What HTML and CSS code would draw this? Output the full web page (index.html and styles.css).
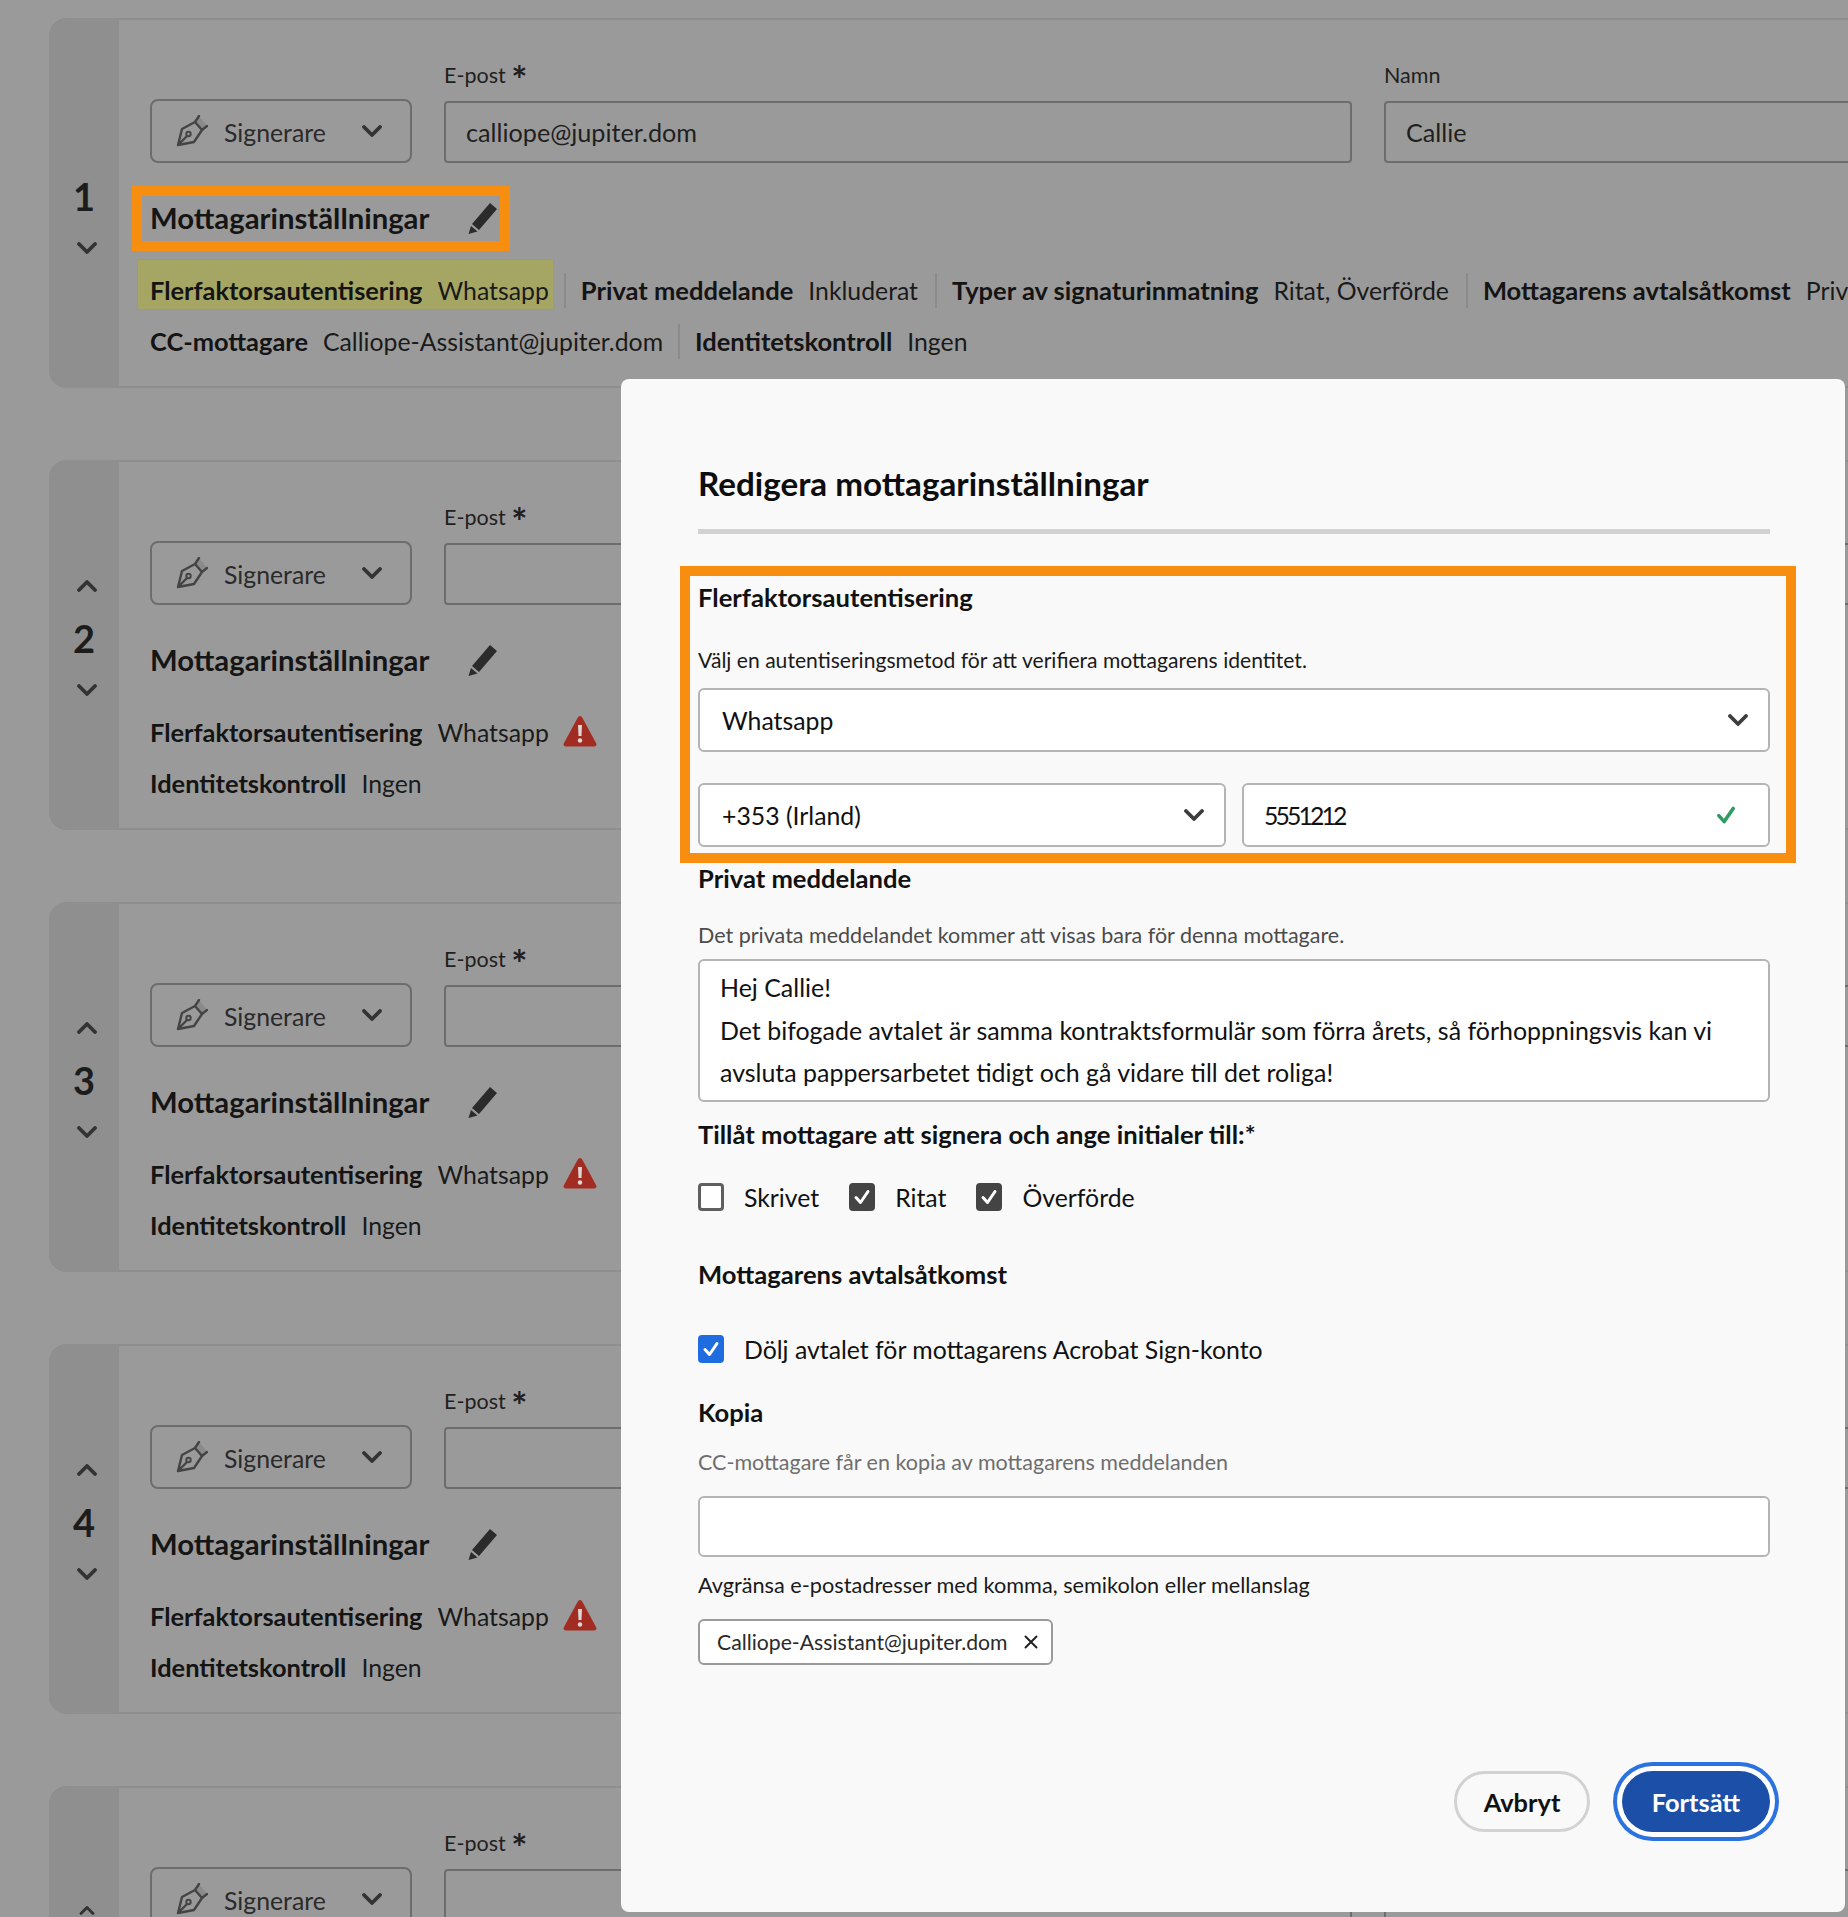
FILE: index.html
```html
<!DOCTYPE html>
<html lang="sv">
<head>
<meta charset="utf-8">
<title>Redigera mottagarinställningar</title>
<link rel="stylesheet" href="styles.css">
</head>
<body>
<svg class="defs" width="0" height="0" aria-hidden="true">
  <symbol id="pen" viewBox="0 0 32 32">
    <path d="M23 1 L31 11 L26 15 L19 7 Z" fill="#8a8a8a" stroke="none"/>
    <path d="M2 30 L6 14 L19 7 L26 15 L18 27 Z M19 7 L23 1 M26 15 L31 11 M2 30 L11 21" fill="none" stroke="#444" stroke-width="2.4" stroke-linejoin="round" stroke-linecap="round"/>
    <circle cx="12.5" cy="19" r="2.2" fill="none" stroke="#444" stroke-width="2"/>
  </symbol>
  <symbol id="down" viewBox="0 0 20 12">
    <path d="M2 2 L10 10 L18 2" fill="none" stroke="currentColor" stroke-width="3.8" stroke-linecap="round" stroke-linejoin="round"/>
  </symbol>
  <symbol id="up" viewBox="0 0 20 12">
    <path d="M2 10 L10 2 L18 10" fill="none" stroke="currentColor" stroke-width="3.8" stroke-linecap="round" stroke-linejoin="round"/>
  </symbol>
  <symbol id="pencil" viewBox="0 0 30 32">
    <path d="M22 1 L29 7 L11 28 L4 22 Z M3 24 L9.5 29.5 L0.5 32 Z" fill="#2b2b2b"/>
  </symbol>
  <symbol id="warn" viewBox="0 0 34 32">
    <path d="M17 1 Q18.5 1 19.5 3 L33 28 Q34.500 31.500 31 31.500 L3 31.500 Q-0.500 31.500 1 28 L14.500 3 Q15.500 1 17 1 Z" fill="#a32c22"/>
    <path d="M15 10 H19 L18.500 21 H15.500 Z" fill="#d8d8d8"/>
    <circle cx="17" cy="25.500" r="2.200" fill="#d8d8d8"/>
  </symbol>
  <symbol id="tick" viewBox="0 0 20 20">
    <path d="M4 10.500 L8.500 15.500 L16 4.500" fill="none" stroke="currentColor" stroke-width="3" stroke-linecap="round" stroke-linejoin="round"/>
  </symbol>
  <symbol id="cross" viewBox="0 0 14 14">
    <path d="M1.500 1.500 L12.500 12.500 M12.500 1.500 L1.500 12.500" fill="none" stroke="currentColor" stroke-width="2" stroke-linecap="round"/>
  </symbol>
</svg>

<main class="page">
  <section class="card">
    <div class="rail">
      <svg class="arrow arrow-up hidden"><use href="#up"/></svg>
      <div class="num">1</div>
      <svg class="arrow"><use href="#down"/></svg>
    </div>
    <div class="body">
      <div class="top">
        <div class="role"><svg class="pen"><use href="#pen"/></svg><span class="role-text">Signerare</span><svg class="role-arrow"><use href="#down"/></svg></div>
        <div class="field email"><div class="label">E-post <span class="ast">*</span></div><div class="input">calliope@jupiter.dom</div></div>
        <div class="field name"><div class="label">Namn</div><div class="input">Callie</div></div>
      </div>
      <div class="settings marked"><h3 class="settings-title">Mottagarinställningar</h3><svg class="pencil"><use href="#pencil"/></svg></div>
      <div class="meta first">
        <div class="item hl"><b>Flerfaktorsautentisering</b><span>Whatsapp</span></div>
        <div class="item"><b>Privat meddelande</b><span>Inkluderat</span></div>
        <div class="item"><b>Typer av signaturinmatning</b><span>Ritat, Överförde</span></div>
        <div class="item"><b>Mottagarens avtalsåtkomst</b><span>Privat</span></div>
      </div>
      <div class="meta">
        <div class="item"><b>CC-mottagare</b><span>Calliope-Assistant@jupiter.dom</span></div>
        <div class="item"><b>Identitetskontroll</b><span>Ingen</span></div>
      </div>
    </div>
  </section>

  <section class="card">
    <div class="rail">
      <svg class="arrow arrow-up"><use href="#up"/></svg>
      <div class="num">2</div>
      <svg class="arrow"><use href="#down"/></svg>
    </div>
    <div class="body">
      <div class="top">
        <div class="role"><svg class="pen"><use href="#pen"/></svg><span class="role-text">Signerare</span><svg class="role-arrow"><use href="#down"/></svg></div>
        <div class="field email"><div class="label">E-post <span class="ast">*</span></div><div class="input"></div></div>
        <div class="field name"><div class="label">Namn</div><div class="input"></div></div>
      </div>
      <div class="settings"><h3 class="settings-title">Mottagarinställningar</h3><svg class="pencil"><use href="#pencil"/></svg></div>
      <div class="meta first">
        <div class="item"><b>Flerfaktorsautentisering</b><span>Whatsapp</span><svg class="warn"><use href="#warn"/></svg></div>
      </div>
      <div class="meta">
        <div class="item"><b>Identitetskontroll</b><span>Ingen</span></div>
      </div>
    </div>
  </section>

  <section class="card">
    <div class="rail">
      <svg class="arrow arrow-up"><use href="#up"/></svg>
      <div class="num">3</div>
      <svg class="arrow"><use href="#down"/></svg>
    </div>
    <div class="body">
      <div class="top">
        <div class="role"><svg class="pen"><use href="#pen"/></svg><span class="role-text">Signerare</span><svg class="role-arrow"><use href="#down"/></svg></div>
        <div class="field email"><div class="label">E-post <span class="ast">*</span></div><div class="input"></div></div>
        <div class="field name"><div class="label">Namn</div><div class="input"></div></div>
      </div>
      <div class="settings"><h3 class="settings-title">Mottagarinställningar</h3><svg class="pencil"><use href="#pencil"/></svg></div>
      <div class="meta first">
        <div class="item"><b>Flerfaktorsautentisering</b><span>Whatsapp</span><svg class="warn"><use href="#warn"/></svg></div>
      </div>
      <div class="meta">
        <div class="item"><b>Identitetskontroll</b><span>Ingen</span></div>
      </div>
    </div>
  </section>

  <section class="card">
    <div class="rail">
      <svg class="arrow arrow-up"><use href="#up"/></svg>
      <div class="num">4</div>
      <svg class="arrow"><use href="#down"/></svg>
    </div>
    <div class="body">
      <div class="top">
        <div class="role"><svg class="pen"><use href="#pen"/></svg><span class="role-text">Signerare</span><svg class="role-arrow"><use href="#down"/></svg></div>
        <div class="field email"><div class="label">E-post <span class="ast">*</span></div><div class="input"></div></div>
        <div class="field name"><div class="label">Namn</div><div class="input"></div></div>
      </div>
      <div class="settings"><h3 class="settings-title">Mottagarinställningar</h3><svg class="pencil"><use href="#pencil"/></svg></div>
      <div class="meta first">
        <div class="item"><b>Flerfaktorsautentisering</b><span>Whatsapp</span><svg class="warn"><use href="#warn"/></svg></div>
      </div>
      <div class="meta">
        <div class="item"><b>Identitetskontroll</b><span>Ingen</span></div>
      </div>
    </div>
  </section>

  <section class="card card-last">
    <div class="rail rail-last">
      <svg class="arrow arrow-up"><use href="#up"/></svg>
    </div>
    <div class="body">
      <div class="top">
        <div class="role"><svg class="pen"><use href="#pen"/></svg><span class="role-text">Signerare</span><svg class="role-arrow"><use href="#down"/></svg></div>
        <div class="field email"><div class="label">E-post <span class="ast">*</span></div><div class="input"></div></div>
        <div class="field name"><div class="label">Namn</div><div class="input"></div></div>
      </div>
    </div>
  </section>
</main>

<div class="modal">
  <h2 class="modal-title">Redigera mottagarinställningar</h2>
  <div class="rule"></div>

  <div class="mfa">
    <h4 class="sec mfa-head">Flerfaktorsautentisering</h4>
    <p class="desc dark mfa-desc">Välj en autentiseringsmetod för att verifiera mottagarens identitet.</p>
    <div class="box select mfa-select"><span>Whatsapp</span><svg class="box-arrow"><use href="#down"/></svg></div>
    <div class="phone">
      <div class="box select"><span>+353 (Irland)</span><svg class="box-arrow"><use href="#down"/></svg></div>
      <div class="box select number"><span class="digits">5551212</span><svg class="ok"><use href="#tick"/></svg></div>
    </div>
  </div>

  <h4 class="sec priv-head">Privat meddelande</h4>
  <p class="desc priv-desc">Det privata meddelandet kommer att visas bara för denna mottagare.</p>
  <div class="box message">Hej Callie!<br>Det bifogade avtalet är samma kontraktsformulär som förra årets, så förhoppningsvis kan vi avsluta pappersarbetet tidigt och gå vidare till det roliga!</div>

  <h4 class="sec allow-head">Tillåt mottagare att signera och ange initialer till:*</h4>
  <div class="checks">
    <div class="check"><span class="cb"></span><span>Skrivet</span></div>
    <div class="check"><span class="cb on"><svg class="cb-tick"><use href="#tick"/></svg></span><span>Ritat</span></div>
    <div class="check"><span class="cb on"><svg class="cb-tick"><use href="#tick"/></svg></span><span>Överförde</span></div>
  </div>

  <h4 class="sec access-head">Mottagarens avtalsåtkomst</h4>
  <div class="check hide-check"><span class="cb blue"><svg class="cb-tick"><use href="#tick"/></svg></span><span>Dölj avtalet för mottagarens Acrobat Sign-konto</span></div>

  <h4 class="sec copy-head">Kopia</h4>
  <p class="desc light copy-desc">CC-mottagare får en kopia av mottagarens meddelanden</p>
  <div class="box copy-input"></div>
  <p class="desc dark copy-help">Avgränsa e-postadresser med komma, semikolon eller mellanslag</p>
  <div class="chip"><span>Calliope-Assistant@jupiter.dom</span><svg class="chip-x"><use href="#cross"/></svg></div>

  <div class="actions">
    <button class="btn cancel">Avbryt</button>
    <button class="btn go">Fortsätt</button>
  </div>
</div>
</body>
</html>
```
FILE: styles.css
```css
* { box-sizing: border-box; }
html, body { margin: 0; width: 1848px; height: 1917px; overflow: hidden; }
body {
  position: relative;
  background: #9a9a9a;
  color: #1a1a1a;
  font-family: "Lato", "Liberation Sans", sans-serif;
  font-size: 24.8px;
}
.defs { position: absolute; }
h2, h3, h4, p { margin: 0; }

.page { display: flex; flex-direction: column; gap: 72px; padding: 18px 0 0 49px; width: 1848px; height: 1917px; overflow: hidden; }

.card {
  display: flex;
  height: 370px;
  flex: none;
  border-top: 2px solid #8e8e8e;
  border-bottom: 2px solid #8e8e8e;
  border-radius: 18px 0 0 18px;
}
.card-last { height: 131px; border-bottom: 0; border-radius: 18px 0 0 0; }
.rail {
  width: 70px;
  flex: none;
  margin: -2px 0;
  background: #8f8f8f;
  border-radius: 18px 0 0 18px;
  display: flex;
  flex-direction: column;
  align-items: center;
  justify-content: center;
  gap: 26px;
  padding-bottom: 14px;
}
.rail-last { margin-bottom: 0; justify-content: flex-start; padding: 120px 0 0; border-radius: 18px 0 0 0; }
.arrow { width: 20px; height: 12px; margin-left: 6px; color: #333; }
.arrow-up { margin-bottom: 2px; }
.hidden { visibility: hidden; }
.num { font-size: 38px; line-height: 36px; font-weight: 700; color: #1c1c1c; margin-bottom: 2px; }

.body { padding: 41px 0 0 31px; flex: 1; min-width: 0; overflow: hidden; }
.top { display: flex; align-items: flex-end; gap: 32px; }
.role {
  width: 262px; height: 64px; flex: none;
  display: flex; align-items: center;
  border: 2px solid #6d6d6d; border-radius: 8px;
  padding-left: 24px;
  color: #2a2a2a;
}
.pen { width: 32px; height: 32px; flex: none; }
.role-text { margin: 3px 0 0 16px; width: 138px; }
.role-arrow { width: 20px; height: 12px; color: #333; }
.field { display: flex; flex-direction: column; gap: 12px; }
.email { width: 908px; flex: none; }
.name { flex: 1; margin-right: -12px; }
.label { font-size: 21.500px; line-height: 28px; color: #1f1f1f; }
.ast { font-size: 38px; line-height: 20px; font-weight: 700; margin-left: 0; vertical-align: -11px; }
.input {
  height: 62px;
  border: 2px solid #6d6d6d; border-radius: 4px;
  padding: 11px 0 0 20px;
  font-size: 25.200px;
  line-height: 36px;
  color: #1f1f1f;
}

.settings { position: relative; display: inline-flex; align-items: center; height: 45px; width: 348px; margin-top: 33px; justify-content: space-between; }
.settings-title { font-size: 29.300px; font-weight: 700; color: #151515; line-height: 43px; height: 45px; }
.pencil { width: 30px; height: 32px; flex: none; margin-top: -2px; }
.marked::after {
  content: "";
  position: absolute;
  inset: -10px -12px -10px -18px;
  border: 10px solid #f78e0f;
}

.meta { position: relative; z-index: 0; display: flex; height: 35px; margin-top: 16px; white-space: nowrap; }
.meta.first { margin-top: 32px; }
.item { display: flex; align-items: center; gap: 15px; padding: 0 17px 0 15px; border-left: 2px solid #8b8b8b; line-height: 35px; position: relative; }
.item:first-child { border-left: 0; padding-left: 0; padding-right: 15px; }
.item b { font-weight: 700; font-size: 25.500px; color: #141414; }
.item:first-child b { font-size: 25.400px; }
.warn { width: 34px; height: 32px; margin-left: -1px; margin-top: -4px; }
.hl::before {
  content: "";
  position: absolute;
  z-index: -1;
  inset: -14px 10px -2px -13px;
  background: #a6a664;
  border: 1px solid #a0a04e;
}

.modal {
  position: absolute;
  left: 621px; top: 379px;
  width: 1224px; height: 1533px;
  padding: 86px 75px 0 77px;
  background: #f9f9f9;
  border-radius: 8px;
  color: #111;
}
.modal-title { height: 40px; font-size: 33.200px; line-height: 37px; font-weight: 700; color: #0d0d0d; }
.rule { height: 5px; margin-top: 24px; background: #d2d2d2; }
.sec { height: 30px; font-size: 25.600px; line-height: 27px; font-weight: 700; color: #111; }
.desc { font-size: 21.500px; line-height: 28px; color: #4b4b4b; }
.dark { color: #1a1a1a; }
.light { color: #6e6e6e; }
.mfa-desc { font-size: 21.100px; }
.box { background: #fff; border: 2px solid #b4b4b4; border-radius: 6px; }
.select { height: 64px; display: flex; align-items: center; justify-content: space-between; padding: 0 20px 0 22px; }
.box-arrow { width: 20px; height: 12px; color: #3d3d3d; }

.mfa {
  width: 1116px; height: 297px;
  margin: 32px 0 0 -18px;
  padding: 8px 16px 0 8px;
  border: 10px solid #f78e0f;
}
.mfa-desc { margin-top: 32px; }
.mfa-select { margin-top: 14px; }
.phone { display: grid; grid-template-columns: 528px 528px; gap: 16px; margin-top: 31px; }
.number { padding: 0 30px 0 20px; }
.digits { letter-spacing: -2.900px; }
.ok { width: 24px; height: 24px; color: #2d9d62; }

.priv-head { margin-top: 2px; }
.priv-desc { margin-top: 26px; }
.message { height: 143px; margin-top: 10px; padding: 5px 30px 0 20px; font-size: 24.950px; line-height: 42.500px; }
.allow-head { margin-top: 19px; }
.checks { display: flex; gap: 30px; margin-top: 32px; }
.check { display: flex; align-items: center; gap: 20px; height: 28px; }
.cb { width: 26px; height: 28px; flex: none; border-radius: 4px; border: 3px solid #5f5f5f; background: #fff; display: flex; align-items: center; justify-content: center; }
.cb.on { background: #444; border-color: #444; color: #fff; }
.cb.blue { background: #1f6ce0; border-color: #1f6ce0; color: #fff; }
.cb-tick { width: 20px; height: 20px; }
.access-head { margin-top: 50px; }
.hide-check { margin-top: 44px; }
.copy-head { margin-top: 36px; }
.copy-desc { margin-top: 19px; }
.copy-input { height: 61px; margin-top: 20px; }
.copy-help { margin-top: 14px; font-size: 21.700px; }
.chip {
  display: flex; align-items: center; justify-content: space-between;
  width: 355px; height: 46px; margin-top: 20px;
  padding: 0 13px 0 17px;
  background: #fff; border: 2px solid #9a9a9a; border-radius: 6px;
  font-size: 21.200px; color: #2a2a2a;
}
.chip-x { width: 14px; height: 14px; color: #222; }
.actions { display: flex; justify-content: flex-end; gap: 32px; margin-top: 106px; }
.btn { height: 61px; border-radius: 31px; font: 700 25.400px "Lato", "Liberation Sans", sans-serif; }
.cancel { width: 136px; background: #f9f9f9; border: 3px solid #d2d2d2; color: #111; }
.go { width: 148px; background: #1b4fa8; border: 0; color: #fff; box-shadow: 0 0 0 5px #fff, 0 0 0 9px #2b73e0; }
```
